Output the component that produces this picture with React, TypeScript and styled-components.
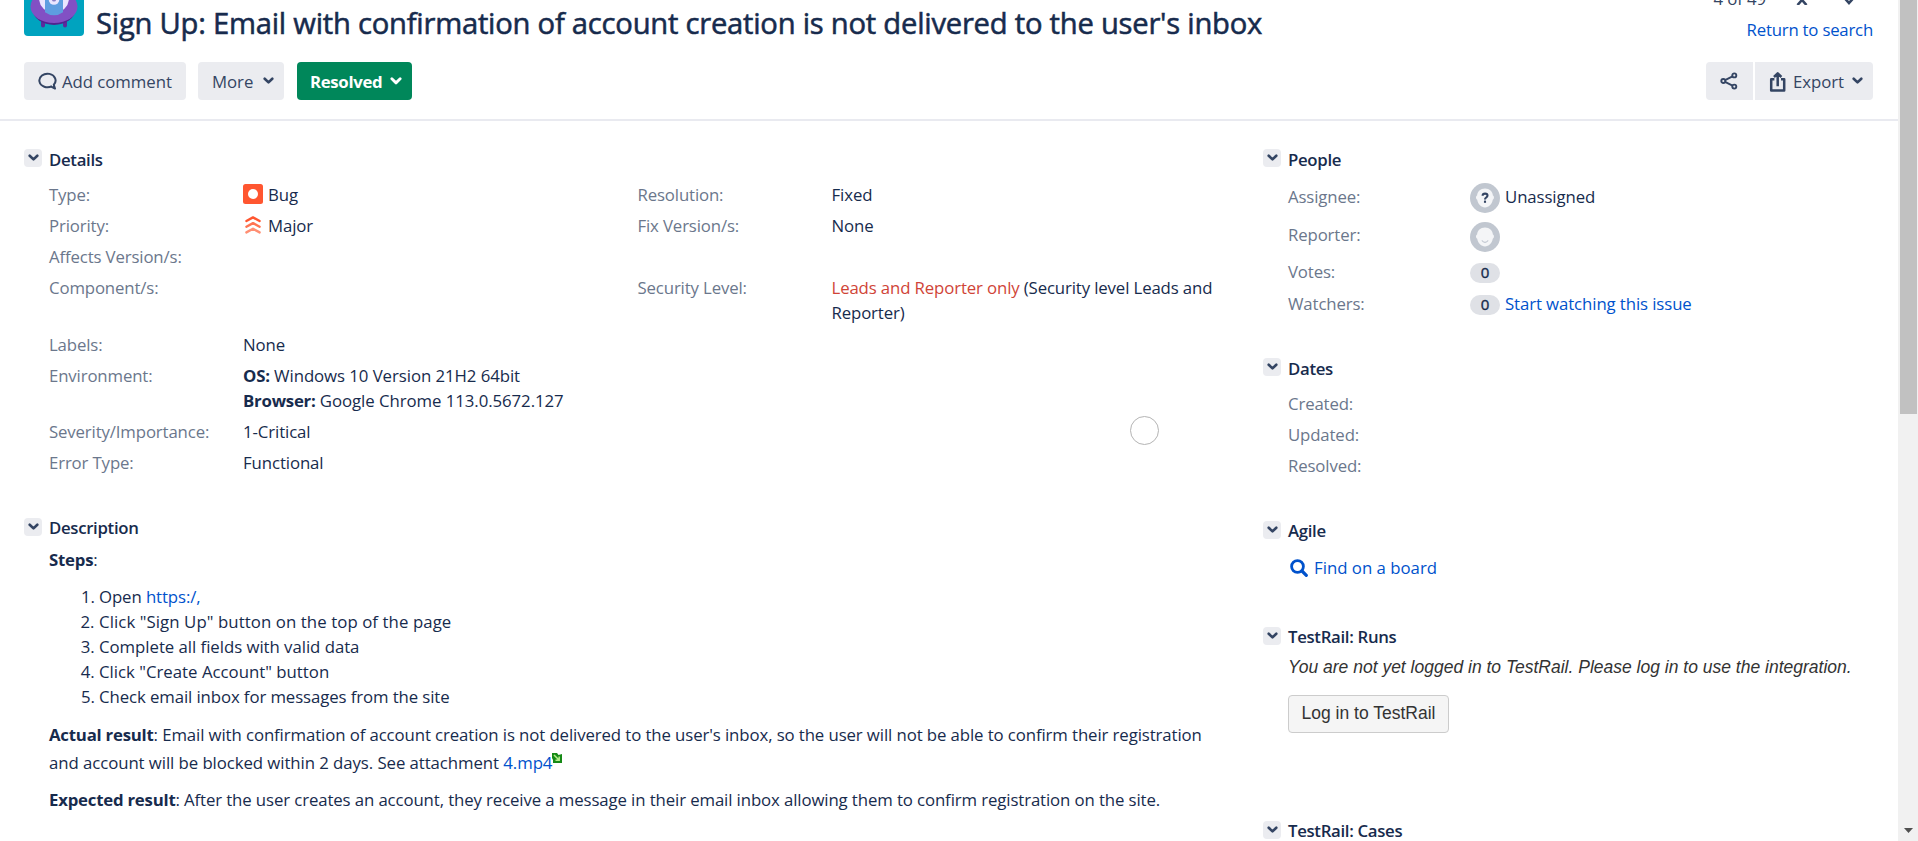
import React from 'react';
import styled, { createGlobalStyle } from 'styled-components';

const color = {
  text: '#172b4d',
  label: '#6b778c',
  link: '#0052cc',
  button: '#ebecf0',
  icon: '#344563',
  border: '#e9eaf0',
};

const GlobalStyle = createGlobalStyle`
  *, *::before, *::after { box-sizing: border-box; }
  html, body { margin: 0; background: #fff; overflow: hidden; }
  body {
    font-family: "Open Sans", "Noto Sans", sans-serif;
    font-size: 16.8px;
    line-height: 25px;
    letter-spacing: -0.1px;
    color: ${color.text};
  }
`;

const Page = styled.div`
  display: flex;
  width: 1918px;
  height: 841px;
  overflow: hidden;
`;

const Main = styled.main`
  flex: 1;
  min-width: 0;
  display: flex;
  flex-direction: column;
  position: relative;
`;

const Header = styled.header`
  display: flex;
  justify-content: space-between;
  height: 121px;
  flex: none;
  padding: 0 25px 0 24px;
  border-bottom: 2px solid ${color.border};
`;

const HeaderSide = styled.div<{ $end?: boolean }>`
  display: flex;
  flex-direction: column;
  align-items: ${(p) => (p.$end ? 'flex-end' : 'flex-start')};
`;

const TitleRow = styled.div`
  display: flex;
  align-items: flex-start;
  height: 62px;
`;

const ProjectAvatar = styled.svg`
  width: 60px;
  height: 60px;
  margin: -24px 12px 0 0;
  flex: none;
`;

const Title = styled.h1`
  margin: 1px 0 0;
  font-size: 29.2px;
  font-weight: 400;
  line-height: 44px;
  letter-spacing: -0.235px;
  -webkit-text-stroke: 0.55px currentColor;
  white-space: nowrap;
`;

const Toolbar = styled.div<{ $gap?: number }>`
  display: flex;
  gap: ${(p) => p.$gap ?? 12}px;
`;

const Button = styled.button<{ $width: number; $primary?: boolean; $edge?: 'left' | 'right'; $spaced?: boolean }>`
  display: flex;
  align-items: center;
  width: ${(p) => p.$width}px;
  height: 38px;
  padding: 0 10px 0 ${(p) => (p.$primary ? 13 : 14)}px;
  margin-left: ${(p) => (p.$spaced ? 1 : 0)}px;
  border: 0;
  border-radius: ${(p) => (p.$edge === 'left' ? '4px 0 0 4px' : p.$edge === 'right' ? '0 4px 4px 0' : '4px')};
  background: ${(p) => (p.$primary ? '#00875a' : color.button)};
  color: ${(p) => (p.$primary ? '#fff' : color.icon)};
  font: inherit;
  letter-spacing: ${(p) => (p.$primary ? '-0.32px' : '-0.05px')};
  font-weight: ${(p) => (p.$primary ? 700 : 400)};
  white-space: nowrap;
`;

const ButtonLabel = styled.span`
  flex: 1;
  text-align: left;
`;

const IconSlot = styled.span<{ $width: number }>`
  display: flex;
  width: ${(p) => p.$width}px;
  flex: none;
`;

const Pager = styled.div`
  display: flex;
  align-items: center;
  height: 25px;
  margin: -14px 18px 6px 0;
  color: ${color.icon};
`;

const PagerArrow = styled.svg<{ $gap: number }>`
  width: 12px;
  height: 12px;
  margin-left: ${(p) => p.$gap}px;
`;

const Link = styled.a`
  color: ${color.link};
  text-decoration: none;
`;

const ReturnLink = styled(Link)`
  display: block;
  height: 45px;
  letter-spacing: -0.22px;
`;

const Columns = styled.div`
  display: grid;
  grid-template-columns: 1239px 1fr;
  padding: 26px 0 0 24px;
`;

const Column = styled.div`
  display: flex;
  flex-direction: column;
`;

const Panel = styled.section<{ $height?: number }>`
  height: ${(p) => (p.$height ? `${p.$height}px` : 'auto')};
`;

const PanelHeading = styled.div`
  display: flex;
  align-items: flex-start;
  height: 25px;
`;

const Toggle = styled.button<{ $drop: number }>`
  display: flex;
  align-items: center;
  justify-content: center;
  width: 18px;
  height: 18px;
  margin: ${(p) => p.$drop}px 7px 0 0;
  padding: 0;
  border: 0;
  border-radius: 4px;
  background: ${color.button};
  color: ${color.icon};
`;

const PanelTitle = styled.h2`
  margin: 0;
  font-size: 16.8px;
  font-weight: 600;
  letter-spacing: -0.32px;
  line-height: 25px;
`;

const PanelBody = styled.div<{ $top?: number }>`
  padding: ${(p) => p.$top ?? 9.7}px 0 0 25px;
`;

const DetailsGrid = styled.div`
  display: grid;
  grid-template-columns: 194px 394.5px 194px 400px;
  row-gap: 6.25px;
`;

const Label = styled.span`
  color: ${color.label};
  letter-spacing: -0.14px;
`;

const Value = styled.span`
  display: flex;
  align-items: center;
  min-height: 25px;
  white-space: nowrap;
`;

const TextValue = styled.span<{ $tracking?: number }>`
  letter-spacing: ${(p) => p.$tracking ?? -0.13}px;
  white-space: nowrap;
`;

const Security = styled.span`
  color: #d04437;
`;

const Strong = styled.strong`
  font-weight: 700;
  letter-spacing: -0.22px;
`;

const Paragraph = styled.p`
  margin: 0 0 12px;
  letter-spacing: -0.11px;
  white-space: nowrap;
`;

const Line = styled.span<{ $height?: number; $tracking?: number }>`
  display: block;
  height: ${(p) => p.$height ?? 25}px;
  letter-spacing: ${(p) => p.$tracking ?? -0.1}px;
`;

const Steps = styled.ol`
  margin: 0 0 12.5px;
  padding-left: 50px;
`;

const Step = styled.li<{ $tracking?: number }>`
  letter-spacing: ${(p) => p.$tracking ?? -0.1}px;
`;

const AttachmentIcon = styled.svg`
  width: 10px;
  height: 10px;
  vertical-align: 6px;
`;

const PersonRow = styled.div<{ $height: number }>`
  display: grid;
  grid-template-columns: 182px 1fr;
  align-items: start;
  height: ${(p) => p.$height}px;
`;

const PersonValue = styled.div<{ $lift?: number }>`
  display: flex;
  align-items: flex-start;
  gap: 5px;

  svg { margin-top: ${(p) => -(p.$lift ?? 0)}px; }
`;

const Badge = styled.span`
  display: block;
  width: 30px;
  height: 20px;
  margin-top: 4px;
  border-radius: 10px;
  background: #dfe1e6;
  font-size: 15px;
  line-height: 18px;
  text-align: center;
  -webkit-text-stroke: 0.4px currentColor;
`;

const DateRow = styled.div`
  height: 31.25px;
`;

const BoardLink = styled(Link)`
  display: flex;
  align-items: center;
  padding-left: 2px;
  gap: 6px;
  letter-spacing: 0;
`;

const Notice = styled.p`
  margin: 0;
  color: #333;
  font-family: "Liberation Sans", Arial, sans-serif;
  font-size: 17.5px;
  font-style: italic;
  letter-spacing: 0;
  line-height: 25px;
  white-space: nowrap;
`;

const LoginButton = styled.button`
  display: block;
  width: 161px;
  height: 38px;
  margin: 15px 0 0;
  padding: 0 0 2px;
  border: 1px solid #ccc;
  border-radius: 4px;
  background: #f5f5f5;
  color: #333;
  font-family: "Liberation Sans", Arial, sans-serif;
  font-size: 17.5px;
`;

const Spinner = styled.div`
  position: absolute;
  left: 1130px;
  top: 416px;
  width: 29px;
  height: 29px;
  border: 1px solid #b4b4b4;
  border-radius: 50%;
`;

const ScrollTrack = styled.div`
  display: flex;
  flex-direction: column;
  align-items: center;
  justify-content: space-between;
  width: 20px;
  flex: none;
  background: #f1f1f1;
`;

const ScrollThumb = styled.div`
  width: 17px;
  height: 414px;
  background: #c1c1c1;
`;

const ScrollArrow = styled.svg`
  width: 9px;
  height: 5px;
  margin-bottom: 8px;
`;

const Chevron = ({ size = 11 }: { size?: number }) => (
  <svg width={size} height={(size * 8) / 11} viewBox="0 0 11 8" fill="none" stroke="currentColor" strokeWidth="2.6" strokeLinecap="round" strokeLinejoin="round">
    <path d="M1.7 1.7 5.5 5.4 9.3 1.7" />
  </svg>
);

const CommentIcon = () => (
  <svg width="20" height="18" viewBox="0 0 20 18" fill="none" stroke="currentColor" strokeWidth="2">
    <path d="M14 14.1a8.1 6.8 0 1 1 1.8-1.4l1.2 3.9-3.8-2" strokeLinejoin="round" />
  </svg>
);

const ShareIcon = () => (
  <svg width="18" height="18" viewBox="0 0 18 18" fill="none" stroke="currentColor" strokeWidth="1.9">
    <circle cx="3.3" cy="9" r="2" />
    <circle cx="14.3" cy="3.4" r="2" />
    <circle cx="14.3" cy="14.6" r="2" />
    <path d="m5.1 8.1 7.4-3.8M5.1 9.9l7.4 3.8" />
  </svg>
);

const ExportIcon = () => (
  <svg width="17" height="21" viewBox="0 0 17 21" fill="none" stroke="currentColor" strokeWidth="2.5" strokeLinejoin="round">
    <path d="M5.4 8.2H2.2v11.2h13V8.2H12M8.7 15.2V2.7M5 6l3.7-3.7L12.4 6" />
  </svg>
);

const BugIcon = () => (
  <svg width="20" height="20" viewBox="0 0 20 20">
    <rect width="20" height="20" rx="2.5" fill="#ff5630" />
    <circle cx="10" cy="10" r="5" fill="#fff" />
  </svg>
);

const MajorIcon = () => (
  <svg width="20" height="20" viewBox="0 0 20 20" fill="none" strokeWidth="2.4" strokeLinecap="round" strokeLinejoin="round">
    <path d="M3.4 6 10 2.4 16.6 6" stroke="#ff5630" />
    <path d="M3.4 11.7 10 8.1l6.6 3.6" stroke="#ff7452" />
    <path d="M3.4 17.4 10 13.8l6.6 3.6" stroke="#ff8f73" />
  </svg>
);

const PersonIcon = ({ unknown }: { unknown?: boolean }) => (
  <svg width="30" height="30" viewBox="0 0 30 30">
    <circle cx="15" cy="15" r="15" fill="#c1c7d0" />
    <path d="M15 5.6c4.600 0 7.600 3 7.900 7 1.400.3 1.500 3.600-.1 4.200-1 4.700-4 7.600-7.800 7.600s-6.800-2.900-7.800-7.600c-1.600-.6-1.500-3.900-.1-4.200.3-4 3.300-7 7.900-7z" fill="#f4f5f7" />
    {unknown ? (
      <g fill="none" stroke={color.icon} strokeWidth="2.1">
        <path d="M12.6 12.7c.1-2.800 4.900-2.700 4.900-.1 0 2-2.500 1.800-2.500 3.800" />
        <path d="M15 17.600v2.200" />
      </g>
    ) : (
      <path d="M12.200 18.800c1.200 2 4.400 2 5.600 0" fill="none" stroke="#c1c7d0" strokeWidth="1.2" strokeLinecap="round" />
    )}
  </svg>
);

const SearchIcon = () => (
  <svg width="18" height="18" viewBox="0 0 18 18" fill="none" stroke="currentColor" strokeWidth="2.8">
    <circle cx="7.5" cy="7.5" r="5.9" />
    <path d="m12 12 4.3 4.3" strokeWidth="3.2" strokeLinecap="round" />
  </svg>
);

const Section = ({ title, drop = 3, height, top, children }: { title: string; drop?: number; height?: number; top?: number; children?: React.ReactNode }) => (
  <Panel $height={height}>
    <PanelHeading>
      <Toggle $drop={drop} aria-label={`Collapse ${title}`}>
        <Chevron />
      </Toggle>
      <PanelTitle>{title}</PanelTitle>
    </PanelHeading>
    {children && <PanelBody $top={top}>{children}</PanelBody>}
  </Panel>
);

export default function App() {
  return (
    <>
      <GlobalStyle />
      <Page>
        <Main>
          <Header>
            <HeaderSide>
              <TitleRow>
                <ProjectAvatar viewBox="0 0 60 60">
                  <rect width="60" height="60" rx="4" fill="#00a3bf" />
                  <path d="M19 42v7.5M41 42v7.5" stroke="#5b2a9d" strokeWidth="4" strokeLinecap="round" />
                  <ellipse cx="30" cy="34" rx="21" ry="15" fill="#50248f" />
                  <ellipse cx="30" cy="30.5" rx="23.5" ry="16.5" fill="#8250c4" />
                  <circle cx="30" cy="22" r="15" fill="#eae6ff" />
                  <path d="M21 20c0-8 18-8 18 0v16.2a15 15 0 0 1-18 0z" fill="#5e9ee0" />
                  <circle cx="30" cy="23.5" r="5.3" fill="#eae6ff" />
                  <circle cx="30" cy="23.5" r="2.1" fill="#8a7fc4" />
                </ProjectAvatar>
                <Title>Sign Up: Email with confirmation of account creation is not delivered to the user's inbox</Title>
              </TitleRow>
              <Toolbar>
                <Button $width={162}>
                  <IconSlot $width={24}><CommentIcon /></IconSlot>
                  <ButtonLabel>Add comment</ButtonLabel>
                </Button>
                <Button $width={86}><ButtonLabel>More</ButtonLabel><Chevron /></Button>
                <Button $width={115} $primary $spaced><ButtonLabel>Resolved</ButtonLabel><Chevron size={12} /></Button>
              </Toolbar>
            </HeaderSide>
            <HeaderSide $end>
              <Pager>
                4 of 49
                <PagerArrow $gap={30} viewBox="0 0 12 12" fill="none" stroke="currentColor" strokeWidth="2.6">
                  <path d="m1.5 12 4.5-5 4.5 5" />
                </PagerArrow>
                <PagerArrow $gap={35} viewBox="0 0 12 12" fill="none" stroke="currentColor" strokeWidth="2.6">
                  <path d="m1.5 5 4.5 5 4.5-5" />
                </PagerArrow>
              </Pager>
              <ReturnLink>Return to search</ReturnLink>
              <Toolbar $gap={2}>
                <Button $width={47} $edge="left" aria-label="Share"><ShareIcon /></Button>
                <Button $width={118} $edge="right">
                  <IconSlot $width={24}><ExportIcon /></IconSlot>
                  <ButtonLabel>Export</ButtonLabel>
                  <Chevron />
                </Button>
              </Toolbar>
            </HeaderSide>
          </Header>

          <Columns>
            <Column>
              <Section title="Details" drop={2} height={368}>
                <DetailsGrid>
                  <Label>Type:</Label>
                  <Value><IconSlot $width={25}><BugIcon /></IconSlot>Bug</Value>
                  <Label>Resolution:</Label>
                  <Value>Fixed</Value>

                  <Label>Priority:</Label>
                  <Value><IconSlot $width={25}><MajorIcon /></IconSlot>Major</Value>
                  <Label>Fix Version/s:</Label>
                  <Value>None</Value>

                  <Label>Affects Version/s:</Label>
                  <Value /><Label /><Value />

                  <Label>Component/s:</Label>
                  <Value />
                  <Label>Security Level:</Label>
                  <TextValue>
                    <Security>Leads and Reporter only</Security> (Security level Leads and<br />Reporter)
                  </TextValue>

                  <Label>Labels:</Label>
                  <Value>None</Value><Label /><Value />

                  <Label>Environment:</Label>
                  <TextValue $tracking={-0.06}>
                    <Strong>OS:</Strong> Windows 10 Version 21H2 64bit<br />
                    <Strong>Browser:</Strong> Google Chrome 113.0.5672.127
                  </TextValue>
                  <Label /><Value />

                  <Label>Severity/Importance:</Label>
                  <Value>1-Critical</Value><Label /><Value />

                  <Label>Error Type:</Label>
                  <Value>Functional</Value>
                </DetailsGrid>
              </Section>

              <Section title="Description" top={7}>
                <Paragraph><Strong>Steps</Strong>:</Paragraph>
                <Steps>
                  <Step>Open <Link>https:/,</Link></Step>
                  <Step $tracking={0.08}>Click "Sign Up" button on the top of the page</Step>
                  <Step $tracking={-0.04}>Complete all fields with valid data</Step>
                  <Step $tracking={0}>Click "Create Account" button</Step>
                  <Step>Check email inbox for messages from the site</Step>
                </Steps>
                <Paragraph>
                  <Line $height={28}>
                    <Strong>Actual result</Strong>: Email with confirmation of account creation is not delivered to the user's inbox, so the user will not be able to confirm their registration
                  </Line>
                  <Line $tracking={-0.07}>
                    and account will be blocked within 2 days. See attachment <Link>4.mp4</Link>
                    <AttachmentIcon viewBox="0 0 10 10">
                      <path d="M0 0h5l1.5 2L10 1v9H1V7L0 5z" fill="#168a16" />
                      <path d="m2 2 5 5M7.2 3.5v3.8H3.5" fill="none" stroke="#b5f08c" strokeWidth="1.5" />
                    </AttachmentIcon>
                  </Line>
                </Paragraph>
                <Paragraph>
                  <Strong>Expected result</Strong>: After the user creates an account, they receive a message in their email inbox allowing them to confirm registration on the site.
                </Paragraph>
              </Section>
            </Column>

            <Column>
              <Section title="People" drop={2} height={209} top={12}>
                <PersonRow $height={38}>
                  <Label>Assignee:</Label>
                  <PersonValue $lift={1}><PersonIcon unknown />Unassigned</PersonValue>
                </PersonRow>
                <PersonRow $height={37}>
                  <Label>Reporter:</Label>
                  <PersonValue><PersonIcon /></PersonValue>
                </PersonRow>
                <PersonRow $height={32}>
                  <Label>Votes:</Label>
                  <PersonValue><Badge>0</Badge></PersonValue>
                </PersonRow>
                <PersonRow $height={31}>
                  <Label>Watchers:</Label>
                  <PersonValue><Badge>0</Badge><Link>Start watching this issue</Link></PersonValue>
                </PersonRow>
              </Section>

              <Section title="Dates" drop={2} height={162}>
                <DateRow><Label>Created:</Label></DateRow>
                <DateRow><Label>Updated:</Label></DateRow>
                <DateRow><Label>Resolved:</Label></DateRow>
              </Section>

              <Section title="Agile" height={106} top={12}>
                <BoardLink><SearchIcon />Find on a board</BoardLink>
              </Section>

              <Section title="TestRail: Runs" height={194} top={6}>
                <Notice>You are not yet logged in to TestRail. Please log in to use the integration.</Notice>
                <LoginButton>Log in to TestRail</LoginButton>
              </Section>

              <Section title="TestRail: Cases" />
            </Column>
          </Columns>
          <Spinner />
        </Main>

        <ScrollTrack>
          <ScrollThumb />
          <ScrollArrow viewBox="0 0 9 5"><path d="M0 0h9L4.5 5z" fill="#505050" /></ScrollArrow>
        </ScrollTrack>
      </Page>
    </>
  );
}
